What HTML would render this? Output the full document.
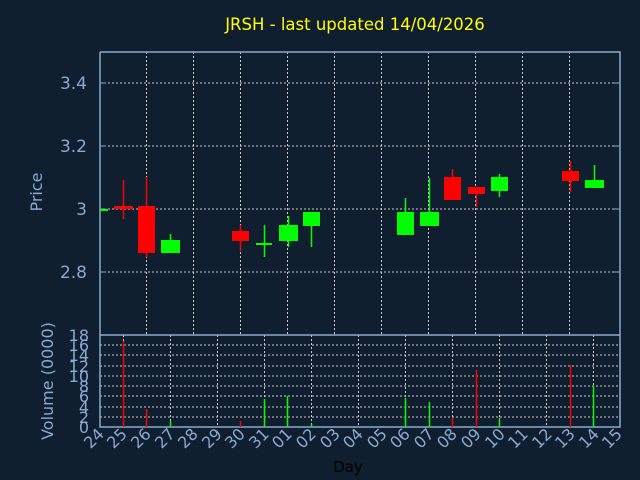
<!DOCTYPE html>
<html><head><meta charset="utf-8"><style>
html,body{margin:0;padding:0;background:#0f1f2f;}
svg{display:block;font-family:"DejaVu Sans","Liberation Sans",sans-serif;}
</style></head><body>
<svg width="640" height="480" viewBox="0 0 640 480" xmlns="http://www.w3.org/2000/svg">
<rect width="640" height="480" fill="#0f1f2f"/>
<text x="355" y="30" fill="#ffff00" font-size="16.5" text-anchor="middle">JRSH - last updated 14/04/2026</text>
<g stroke="#c8c8c8" stroke-width="1" stroke-dasharray="2,2" fill="none">
<line x1="100" y1="83" x2="620" y2="83"/>
<line x1="100" y1="146" x2="620" y2="146"/>
<line x1="100" y1="209" x2="620" y2="209"/>
<line x1="100" y1="272" x2="620" y2="272"/>
<line x1="146.5" y1="52" x2="146.5" y2="335"/>
<line x1="193.5" y1="52" x2="193.5" y2="335"/>
<line x1="240.5" y1="52" x2="240.5" y2="335"/>
<line x1="287.5" y1="52" x2="287.5" y2="335"/>
<line x1="334.5" y1="52" x2="334.5" y2="335"/>
<line x1="381.5" y1="52" x2="381.5" y2="335"/>
<line x1="428.5" y1="52" x2="428.5" y2="335"/>
<line x1="475.5" y1="52" x2="475.5" y2="335"/>
<line x1="522.5" y1="52" x2="522.5" y2="335"/>
<line x1="569.5" y1="52" x2="569.5" y2="335"/>
<line x1="100" y1="345" x2="620" y2="345"/>
<line x1="100" y1="355" x2="620" y2="355"/>
<line x1="100" y1="366" x2="620" y2="366"/>
<line x1="100" y1="376" x2="620" y2="376"/>
<line x1="100" y1="386" x2="620" y2="386"/>
<line x1="100" y1="396" x2="620" y2="396"/>
<line x1="100" y1="407" x2="620" y2="407"/>
<line x1="100" y1="417" x2="620" y2="417"/>
<line x1="123.5" y1="335" x2="123.5" y2="427"/>
<line x1="170.5" y1="335" x2="170.5" y2="427"/>
<line x1="217.5" y1="335" x2="217.5" y2="427"/>
<line x1="264.5" y1="335" x2="264.5" y2="427"/>
<line x1="311.5" y1="335" x2="311.5" y2="427"/>
<line x1="358.5" y1="335" x2="358.5" y2="427"/>
<line x1="405.5" y1="335" x2="405.5" y2="427"/>
<line x1="452.5" y1="335" x2="452.5" y2="427"/>
<line x1="499.5" y1="335" x2="499.5" y2="427"/>
<line x1="546.5" y1="335" x2="546.5" y2="427"/>
<line x1="593.5" y1="335" x2="593.5" y2="427"/>
</g>
<g stroke="#8aaad0" stroke-width="1.5" fill="none">
<polyline points="100,52 100,427 620,427 620,52 100,52"/>
<line x1="100" y1="335" x2="620" y2="335"/>
</g>
<g stroke="#8aaad0" stroke-width="1">
<line x1="620" y1="83" x2="614" y2="83"/><line x1="620" y1="146" x2="614" y2="146"/><line x1="620" y1="209" x2="614" y2="209"/><line x1="620" y1="272" x2="614" y2="272"/>
<line x1="100" y1="83" x2="106" y2="83"/><line x1="100" y1="146" x2="106" y2="146"/><line x1="100" y1="209" x2="106" y2="209"/><line x1="100" y1="272" x2="106" y2="272"/>
</g>
<g fill="#8aaad0" font-size="17" text-anchor="end">
<text x="87" y="89">3.4</text><text x="87" y="152">3.2</text><text x="87" y="215">3</text><text x="87" y="278">2.8</text>
</g>
<text transform="translate(42,192) rotate(-90)" fill="#8aaad0" font-size="16" text-anchor="middle">Price</text>
<text transform="translate(53,381) rotate(-90)" fill="#8aaad0" font-size="16" text-anchor="middle">Volume (0000)</text>
<g fill="#8aaad0" font-size="16" text-anchor="end">
<text x="89" y="341">18</text><text x="89" y="351">16</text><text x="89" y="361">14</text><text x="89" y="372">12</text><text x="89" y="382">10</text><text x="89" y="392">8</text><text x="89" y="402">6</text><text x="89" y="413">4</text><text x="89" y="423">2</text><text x="89" y="433">0</text>
</g>
<g fill="#8aaad0" font-size="16" text-anchor="end">
<text transform="translate(105,435) rotate(-45)">24</text>
<text transform="translate(128,435) rotate(-45)">25</text>
<text transform="translate(152,435) rotate(-45)">26</text>
<text transform="translate(176,435) rotate(-45)">27</text>
<text transform="translate(199,435) rotate(-45)">28</text>
<text transform="translate(223,435) rotate(-45)">29</text>
<text transform="translate(246,435) rotate(-45)">30</text>
<text transform="translate(270,435) rotate(-45)">31</text>
<text transform="translate(293,435) rotate(-45)">01</text>
<text transform="translate(317,435) rotate(-45)">02</text>
<text transform="translate(341,435) rotate(-45)">03</text>
<text transform="translate(364,435) rotate(-45)">04</text>
<text transform="translate(388,435) rotate(-45)">05</text>
<text transform="translate(411,435) rotate(-45)">06</text>
<text transform="translate(435,435) rotate(-45)">07</text>
<text transform="translate(458,435) rotate(-45)">08</text>
<text transform="translate(482,435) rotate(-45)">09</text>
<text transform="translate(506,435) rotate(-45)">10</text>
<text transform="translate(529,435) rotate(-45)">11</text>
<text transform="translate(553,435) rotate(-45)">12</text>
<text transform="translate(576,435) rotate(-45)">13</text>
<text transform="translate(600,435) rotate(-45)">14</text>
<text transform="translate(623,435) rotate(-45)">15</text>
</g>
<text x="348" y="472" fill="#000000" font-size="15" text-anchor="middle">Day</text>
<g stroke-width="1.5">
<line x1="123.5" y1="180" x2="123.5" y2="219" stroke="#ff0000"/>
<line x1="146.5" y1="177" x2="146.5" y2="257" stroke="#ff0000"/>
<line x1="170.5" y1="234" x2="170.5" y2="253" stroke="#00ff00"/>
<line x1="240.5" y1="225" x2="240.5" y2="251" stroke="#ff0000"/>
<line x1="264.5" y1="225" x2="264.5" y2="257" stroke="#00ff00"/>
<line x1="288.5" y1="216" x2="288.5" y2="247" stroke="#00ff00"/>
<line x1="311.5" y1="212" x2="311.5" y2="247" stroke="#00ff00"/>
<line x1="405.5" y1="198" x2="405.5" y2="235" stroke="#00ff00"/>
<line x1="429.5" y1="178" x2="429.5" y2="226" stroke="#00ff00"/>
<line x1="452.5" y1="169" x2="452.5" y2="200" stroke="#ff0000"/>
<line x1="476.5" y1="187" x2="476.5" y2="207" stroke="#ff0000"/>
<line x1="499.5" y1="174" x2="499.5" y2="197" stroke="#00ff00"/>
<line x1="570.5" y1="161" x2="570.5" y2="192" stroke="#ff0000"/>
<line x1="594.5" y1="165" x2="594.5" y2="188" stroke="#00ff00"/>
</g>
<rect x="100" y="209" width="8" height="2" fill="#00ff00"/>
<rect x="114" y="206" width="19" height="3" fill="#ff0000"/>
<rect x="138" y="206" width="17" height="47" fill="#ff0000"/>
<rect x="161" y="240" width="19" height="13" fill="#00ff00"/>
<rect x="232" y="231" width="17" height="10" fill="#ff0000"/>
<rect x="256" y="243" width="16" height="2" fill="#00ff00"/>
<rect x="279" y="225" width="19" height="16" fill="#00ff00"/>
<rect x="303" y="212" width="17" height="14" fill="#00ff00"/>
<rect x="397" y="212" width="17" height="23" fill="#00ff00"/>
<rect x="420" y="212" width="19" height="14" fill="#00ff00"/>
<rect x="444" y="177" width="17" height="23" fill="#ff0000"/>
<rect x="468" y="187" width="17" height="7" fill="#ff0000"/>
<rect x="491" y="177" width="17" height="14" fill="#00ff00"/>
<rect x="562" y="171" width="17" height="10" fill="#ff0000"/>
<rect x="585" y="180" width="19" height="8" fill="#00ff00"/>
<g stroke-width="1.5">
<line x1="123.5" y1="341" x2="123.5" y2="427" stroke="#ff0000"/>
<line x1="146.5" y1="409" x2="146.5" y2="427" stroke="#ff0000"/>
<line x1="170.5" y1="421" x2="170.5" y2="427" stroke="#00ff00"/>
<line x1="240.5" y1="421" x2="240.5" y2="427" stroke="#ff0000"/>
<line x1="264.5" y1="399" x2="264.5" y2="427" stroke="#00ff00"/>
<line x1="287.5" y1="396" x2="287.5" y2="427" stroke="#00ff00"/>
<line x1="311.5" y1="424" x2="311.5" y2="427" stroke="#00ff00"/>
<line x1="405.5" y1="398" x2="405.5" y2="427" stroke="#00ff00"/>
<line x1="429.5" y1="402" x2="429.5" y2="427" stroke="#00ff00"/>
<line x1="452.5" y1="418" x2="452.5" y2="427" stroke="#ff0000"/>
<line x1="476.5" y1="370" x2="476.5" y2="427" stroke="#ff0000"/>
<line x1="499.5" y1="418" x2="499.5" y2="427" stroke="#00ff00"/>
<line x1="570.5" y1="365" x2="570.5" y2="427" stroke="#ff0000"/>
<line x1="593.5" y1="386" x2="593.5" y2="427" stroke="#00ff00"/>
</g>
</svg>
</body></html>
